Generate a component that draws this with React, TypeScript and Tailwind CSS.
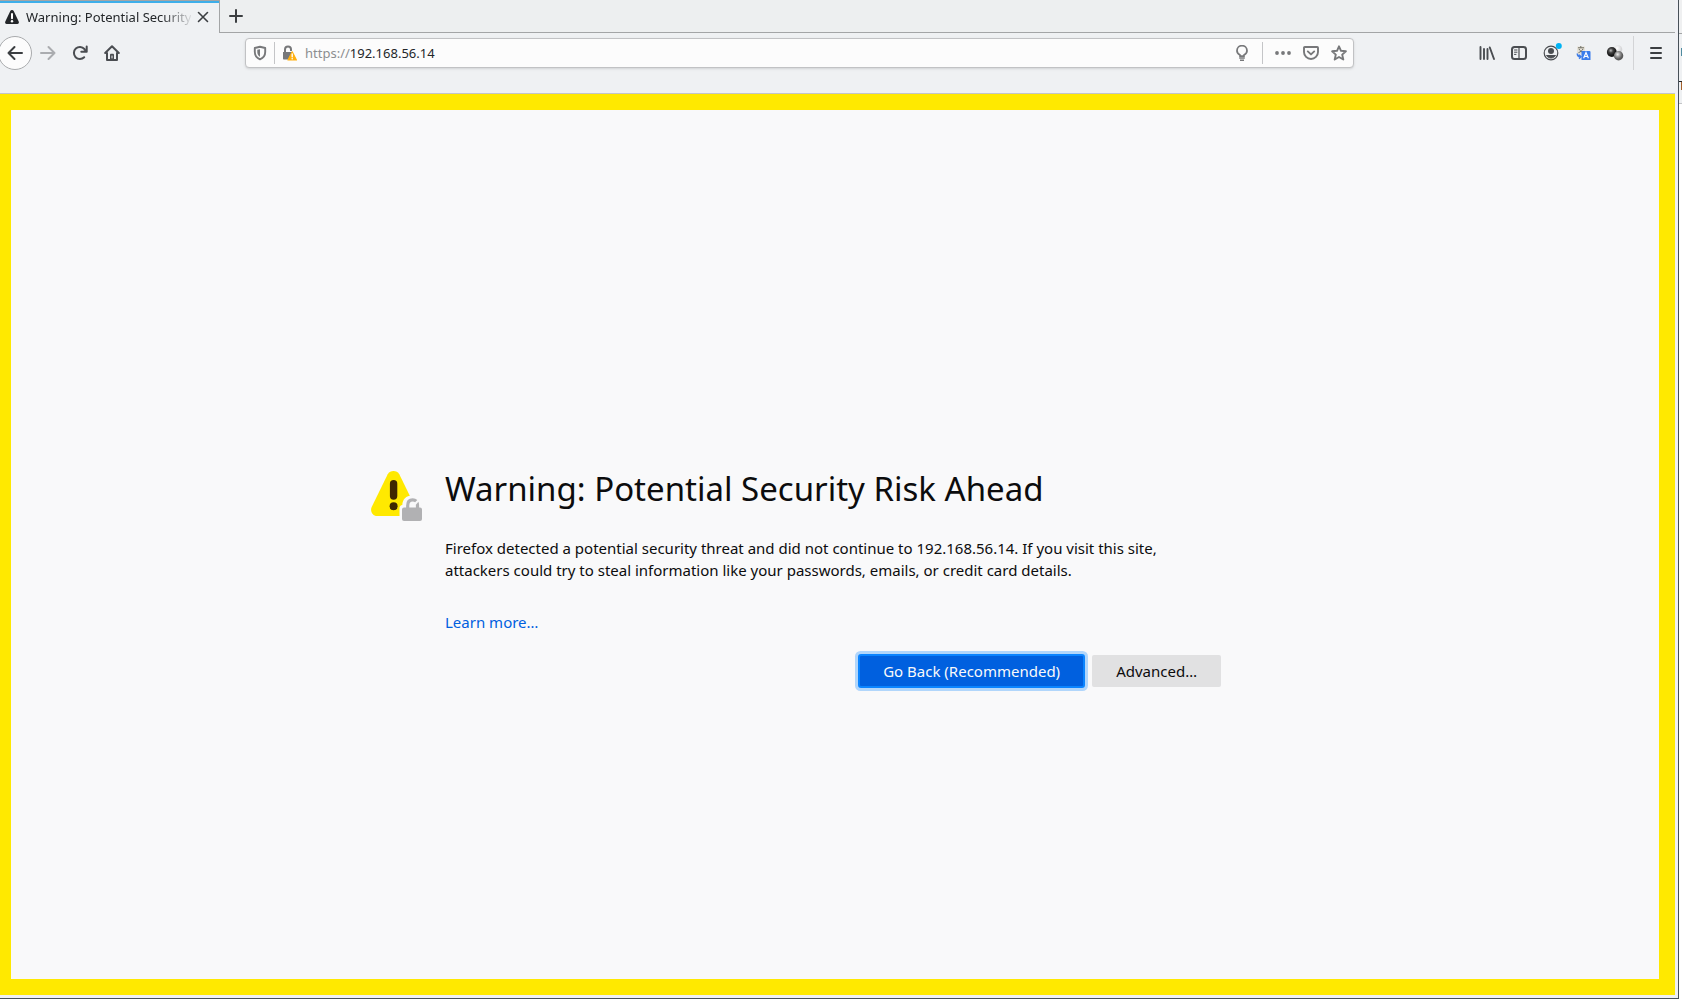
import React from "react";

const toolIcon = "flex size-8 shrink-0 items-center justify-center text-[#4a4d51]";
const urlIcon = "flex size-7 shrink-0 items-center justify-center text-[#77787a]";

function WarningGlyph() {
  return (
    <svg width="16" height="16" viewBox="0 0 16 16" className="shrink-0">
      <path d="M8 1c.8 0 1.400.4 1.700 1l5 10.500c.6 1.200-.1 2.500-1.400 2.500H2.700c-1.300 0-2-1.300-1.400-2.500l5-10.500c.3-.6.9-1 1.700-1z" fill="#232629" />
      <path d="M8 5v4.200" stroke="#fff" strokeWidth="2" strokeLinecap="round" />
      <circle cx="8" cy="12.200" r="1.200" fill="#fff" />
    </svg>
  );
}

function Tabs() {
  return (
    <div className="flex h-[33px] bg-[#edeff0]">
      <div className="flex w-[220px] items-center border-t border-r border-[#a3a5a6] bg-[#eff1f3]">
        <div className="flex h-full w-full items-center border-t-2 border-[#3daee9] pr-2 pb-0.5 pl-1">
          <WarningGlyph />
          <span className="ml-1.5 whitespace-nowrap text-[13px] leading-5 text-[#232629] [mask-image:linear-gradient(to_right,black_136px,transparent_168px)]">
            Warning: Potential Security
          </span>
          <button aria-label="Close tab" className="ml-auto flex size-4 shrink-0 items-center justify-center">
            <svg width="12" height="12" viewBox="0 0 12 12" fill="none" stroke="#3b3e41" strokeWidth="1.600" strokeLinecap="round">
              <path d="M1.500 1.500l9 9M10.500 1.500l-9 9" />
            </svg>
          </button>
        </div>
      </div>
      <div className="flex flex-1 items-center border-b border-[#a3a5a6]">
        <button aria-label="New tab" className="flex size-8 items-center justify-center">
          <svg width="14" height="14" viewBox="0 0 14 14" fill="none" stroke="#3b3e41" strokeWidth="2" strokeLinecap="round">
            <path d="M7 1v12M1 7h12" />
          </svg>
        </button>
      </div>
    </div>
  );
}

function UrlBar() {
  return (
    <div className="flex h-[30px] min-w-0 flex-1 items-center rounded border border-[#c1c2c4] bg-[#fcfcfc] shadow-sm">
      <button aria-label="Tracking protection" className={urlIcon}>
        <svg width="16" height="16" viewBox="0 0 16 16" fill="none">
          <path d="M8 1.800l5.200 1.200v4c0 3.300-1.700 5.900-5.200 7.300C4.500 12.900 2.800 10.300 2.800 7V3z" stroke="currentColor" strokeWidth="1.900" strokeLinejoin="round" />
          <path d="M8 4.200v7.600C6.200 10.700 5.300 9.200 5.300 7V4.800z" fill="currentColor" />
        </svg>
      </button>
      <div className="h-[22px] w-px bg-[#c4c5c7]" />
      <button aria-label="Connection not secure" className={urlIcon}>
        <svg width="16" height="16" viewBox="0 0 16 16" fill="none">
          <path d="M4 8V4.500a3 3 0 0 1 6 0V6" stroke="currentColor" strokeWidth="2" />
          <path d="M2 7h9v7.500H3c-.6 0-1-.4-1-1z" fill="currentColor" />
          <path d="M11.200 6.800l4.200 8.200H7z" fill="#ffb010" stroke="#ffb010" strokeWidth="1.200" strokeLinejoin="round" />
          <path d="M11.200 9v2.700" stroke="#fff" strokeWidth="1.400" strokeLinecap="round" />
          <circle cx="11.200" cy="13.800" r=".8" fill="#fff" />
        </svg>
      </button>
      <div className="relative ml-0.5 h-6 min-w-0 flex-1 text-[13px] leading-6">
        <input aria-label="Address" defaultValue="https://192.168.56.14" className="absolute inset-0 w-full bg-transparent text-transparent outline-none" />
        <span className="pointer-events-none whitespace-nowrap text-[#8c8e90]">
          https://<span className="text-[#232629]">192.168.56.14</span>
        </span>
      </div>
      <button aria-label="Suggestions" className={urlIcon}>
        <svg width="16" height="16" viewBox="0 0 16 16" fill="none" stroke="currentColor" strokeWidth="1.800">
          <path d="M6 11.200V10C4.200 9 3 7.700 3 5.700a5 5 0 0 1 10 0C13 7.700 11.800 9 10 10v1.200z" strokeLinejoin="round" />
          <path d="M5.200 13h5.600M6 15.200h4" strokeWidth="1.400" />
        </svg>
      </button>
      <div className="mr-1.5 ml-1.5 h-[22px] w-px bg-[#c4c5c7]" />
      <button aria-label="Page actions" className={urlIcon}>
        <svg width="16" height="16" viewBox="0 0 16 16" fill="currentColor">
          <circle cx="2" cy="8" r="1.900" /><circle cx="8" cy="8" r="1.900" /><circle cx="14" cy="8" r="1.900" />
        </svg>
      </button>
      <button aria-label="Save to Pocket" className={urlIcon}>
        <svg width="16" height="16" viewBox="0 0 16 16" fill="none" stroke="currentColor" strokeWidth="1.900" strokeLinecap="round" strokeLinejoin="round">
          <path d="M1.800 2h12.400c.5 0 .8.300.8.800V7a7 7 0 0 1-14 0V2.800c0-.5.3-.8.8-.8z" />
          <path d="M4.800 6.400L8 9.400l3.200-3" />
        </svg>
      </button>
      <button aria-label="Bookmark this page" className={urlIcon}>
        <svg width="16" height="16" viewBox="0 0 16 16" fill="none" stroke="currentColor" strokeWidth="1.900" strokeLinejoin="round">
          <path d="M8 1.300l2 4.500 4.900.5-3.700 3.300 1.100 4.900L8 12l-4.300 2.500 1.100-4.900L1.100 6.300 6 5.800z" />
        </svg>
      </button>
    </div>
  );
}

function Toolbar() {
  return (
    <div className="flex h-[61px] items-start border-b border-[#c3c5c7] bg-[#eff1f3] pt-[3px]">
      <nav className="-ml-0.5 flex h-[34px] w-[247px] shrink-0 items-center">
        <button aria-label="Back" className="flex size-[34px] items-center justify-center rounded-full border border-[#a9abad] bg-[#fcfcfc] text-[#3b3e41]">
          <svg width="16" height="16" viewBox="0 0 16 16" fill="none" stroke="currentColor" strokeWidth="2" strokeLinecap="round" strokeLinejoin="round">
            <path d="M15 8H1.500M7.500 2l-6 6 6 6" />
          </svg>
        </button>
        <button aria-label="Forward" disabled className="flex size-8 items-center justify-center text-[#aaacaf]">
          <svg width="16" height="16" viewBox="0 0 16 16" fill="none" stroke="currentColor" strokeWidth="2" strokeLinecap="round" strokeLinejoin="round">
            <path d="M1 8h13.500M8.500 2l6 6-6 6" />
          </svg>
        </button>
        <button aria-label="Reload" className={toolIcon}>
          <svg width="16" height="16" viewBox="0 0 16 16" fill="none" stroke="currentColor" strokeWidth="2" strokeLinecap="round">
            <path d="M12.200 12.200A6 6 0 1 1 12.400 4" />
            <path d="M14.700 1.500v5.300H9.300" strokeLinejoin="round" />
            <path d="M14.500 3v3.500H11z" fill="currentColor" stroke="none" />
          </svg>
        </button>
        <button aria-label="Home" className={toolIcon}>
          <svg width="16" height="16" viewBox="0 0 16 16" fill="none" stroke="currentColor" strokeWidth="2" strokeLinecap="round" strokeLinejoin="round">
            <path d="M1.200 8L8 1.300 14.800 8M3 8v7h10V8" />
            <path d="M6 14.500V10c0-.8.500-1.300 1.300-1.300h1.400c.8 0 1.300.5 1.300 1.300v4.500z" fill="currentColor" stroke="none" />
            <path d="M8 11v2" stroke="#eff0f4" strokeWidth="1" />
          </svg>
        </button>
      </nav>
      <div className="mt-0.5 flex min-w-0 flex-1 pr-[117px]">
        <UrlBar />
      </div>
      <div className="flex h-[34px] shrink-0 items-center pr-[3px]">
        <button aria-label="Library" className={toolIcon}>
          <svg width="16" height="16" viewBox="0 0 16 16" fill="none" stroke="currentColor" strokeWidth="2" strokeLinecap="round">
            <path d="M1.500 2v12M5 4v10M8.500 4v10M10.800 2.500L15 14" strokeWidth="1.900" />
          </svg>
        </button>
        <button aria-label="Sidebars" className={toolIcon}>
          <svg width="16" height="16" viewBox="0 0 16 16" fill="none" stroke="currentColor" strokeLinecap="round">
            <rect x="1" y="2" width="14" height="12" rx="2.500" strokeWidth="2" />
            <path d="M8 2v12" strokeWidth="1.200" />
            <path d="M3.500 5h2.500M3.500 7.200h2.500M3.500 9.400h1.500" strokeWidth="1" />
          </svg>
        </button>
        <button aria-label="Account" className={toolIcon}>
          <svg width="18" height="18" viewBox="0 0 18 18" fill="none" className="overflow-visible">
            <circle cx="9" cy="9" r="6.800" stroke="currentColor" strokeWidth="1.200" />
            <circle cx="9" cy="7" r="3" fill="currentColor" />
            <path d="M4.500 11.500h9a5.300 5.300 0 0 1-9 0z" fill="currentColor" stroke="currentColor" strokeLinejoin="round" />
            <circle cx="16.800" cy="2" r="3" fill="#00b3f4" />
          </svg>
        </button>
        <button aria-label="Translate" className={toolIcon}>
          <svg width="16" height="16" viewBox="0 0 16 16" fill="none">
            <path d="M2 1.500h8v8H2z" fill="#e6e2d8" />
            <path d="M5.800 1v1.600M3 2.800h6M4 4c.8 1.700 2.500 3 4.500 3.600M8 4C7.200 5.700 5.500 7 3.500 7.600" stroke="#6b6b60" strokeWidth="1" />
            <path d="M2.300 8.500c0 2 .8 3.200 3 3.200M4 9.800l2 1.900-2 1.900" stroke="#3f7de8" strokeWidth="1.500" />
            <path d="M6.500 6H14.500a1 1 0 0 1 1 1V15H6.500z" fill="#3b7deb" />
            <path d="M8.600 13.200l2.400-5.700 2.400 5.700M9.500 11.500h3" stroke="#fff" strokeWidth="1.200" />
          </svg>
        </button>
        <button aria-label="Extension" className={toolIcon}>
          <svg width="18" height="18" viewBox="0 0 18 18" className="overflow-visible">
            <defs>
              <radialGradient id="ballWhite" cx=".4" cy=".35"><stop offset="0" stopColor="#fff" /><stop offset="1" stopColor="#d5d6d8" /></radialGradient>
              <radialGradient id="ballBlack" cx=".4" cy=".35"><stop offset="0" stopColor="#c0c0c0" /><stop offset=".45" stopColor="#444" /><stop offset="1" stopColor="#151515" /></radialGradient>
              <radialGradient id="ballGray" cx=".4" cy=".35"><stop offset="0" stopColor="#eee" /><stop offset=".5" stopColor="#9a9a9a" /><stop offset="1" stopColor="#5a5a5a" /></radialGradient>
            </defs>
            <circle cx="12" cy="5.500" r="4.300" fill="url(#ballWhite)" />
            <circle cx="5.800" cy="8" r="4.900" fill="url(#ballBlack)" />
            <circle cx="12.600" cy="11.800" r="4.700" fill="url(#ballGray)" />
          </svg>
        </button>
        <div className="mr-1.5 ml-0.5 h-[34px] w-px bg-[#d3d4d6]" />
        <button aria-label="Menu" className={toolIcon}>
          <svg width="16" height="16" viewBox="0 0 16 16" stroke="#3b3e41" strokeWidth="2" strokeLinecap="round">
            <path d="M3 3h10M3 8h10M3 13h10" />
          </svg>
        </button>
      </div>
    </div>
  );
}

function WarningArt() {
  return (
    <svg width="53" height="54" viewBox="0 0 53 54" fill="none" className="shrink-0">
      <path d="M16.700 5.300c2.400-4.400 9.200-4.400 11.600 0l16 32.700c1.900 4-.8 9-5.300 9H6C1.500 47-1.200 42 .7 38z" fill="#ffe900" />
      <path d="M22.600 14.700v12.300" stroke="#3e2800" strokeWidth="7.400" strokeLinecap="round" />
      <circle cx="22.600" cy="37.300" r="4" fill="#3e2800" />
      <path d="M28.500 54V39c0-1.500 1.200-2.800 2.800-3C31.500 30.500 35 26.500 41 26.500c6.200 0 9.500 4 9.800 9.500l2.200 2.500V54z" fill="#f9f9fa" />
      <rect x="31" y="38.500" width="20" height="13.500" rx="2" fill="#b1b1b3" />
      <path d="M36.700 39v-2.500c0-3.500 1.800-5.700 5-5.700 1.500 0 2.700.5 3.500 1.300" stroke="#b1b1b3" strokeWidth="3.200" />
      <path d="M47.400 32.800c.5 1.200.7 2.400.7 3.700v2.500h-3.200v-3.200z" fill="#b1b1b3" />
    </svg>
  );
}

function CertificateWarning() {
  return (
    <main className="flex flex-1 items-center justify-center border-[16px] border-l-[11px] border-[#ffe900] bg-[#f9f9fa] pt-[67px] pr-[78px] text-[15px] leading-[22px] text-[#0c0c0d]">
      <section className="flex w-[850px] gap-[21px]">
        <WarningArt />
        <div className="min-w-0 flex-1">
          <h1 className="text-[33px] leading-10">Warning: Potential Security Risk Ahead</h1>
          <p className="mt-7 w-[740px]">
            Firefox detected a potential security threat and did not continue to 192.168.56.14. If you visit this site, attackers could try to steal information like your passwords, emails, or credit card details.
          </p>
          <p className="mt-[30px]"><a href="#learn-more" className="text-[#0060df]">Learn more…</a></p>
          <div className="mt-[22px] flex justify-end gap-2">
            <button className="h-8 rounded-[2px] bg-[#0060df] px-6 text-[#f9f9fa] shadow-[0_0_0_4px_rgba(10,132,255,0.3)] outline-2 -outline-offset-1 outline-[#0a84ff]">Go Back (Recommended)</button>
            <button className="h-8 rounded-[2px] bg-[#e1e1e2] px-6">Advanced…</button>
          </div>
        </div>
      </section>
    </main>
  );
}

function NeighbourWindow() {
  return (
    <aside className="flex w-[3px] shrink-0 flex-col bg-white">
      <div className="h-[34px] border-b border-[#a3a5a6] bg-[#eff0f1]" />
      <div className="flex h-[70px] flex-col items-end border-b border-[#c3c5c7] bg-[#eff1f3] pt-3.5">
        <div className="h-2 w-px bg-[#4f8ba0]" />
        <div className="mt-[25px] h-px w-full bg-[#232629]" />
        <div className="h-2 w-px bg-[#a4602c]" />
      </div>
    </aside>
  );
}

export default function App() {
  return (
    <div className="flex min-h-screen flex-col bg-white font-['Noto_Sans',sans-serif]">
      <div className="mb-[3px] flex flex-1">
        <div className="flex min-w-0 flex-1 flex-col border-r border-b border-[#475057] bg-[#eff0f4] pr-[3px] pb-[3px]">
          <Tabs />
          <Toolbar />
          <CertificateWarning />
        </div>
        <NeighbourWindow />
      </div>
    </div>
  );
}
